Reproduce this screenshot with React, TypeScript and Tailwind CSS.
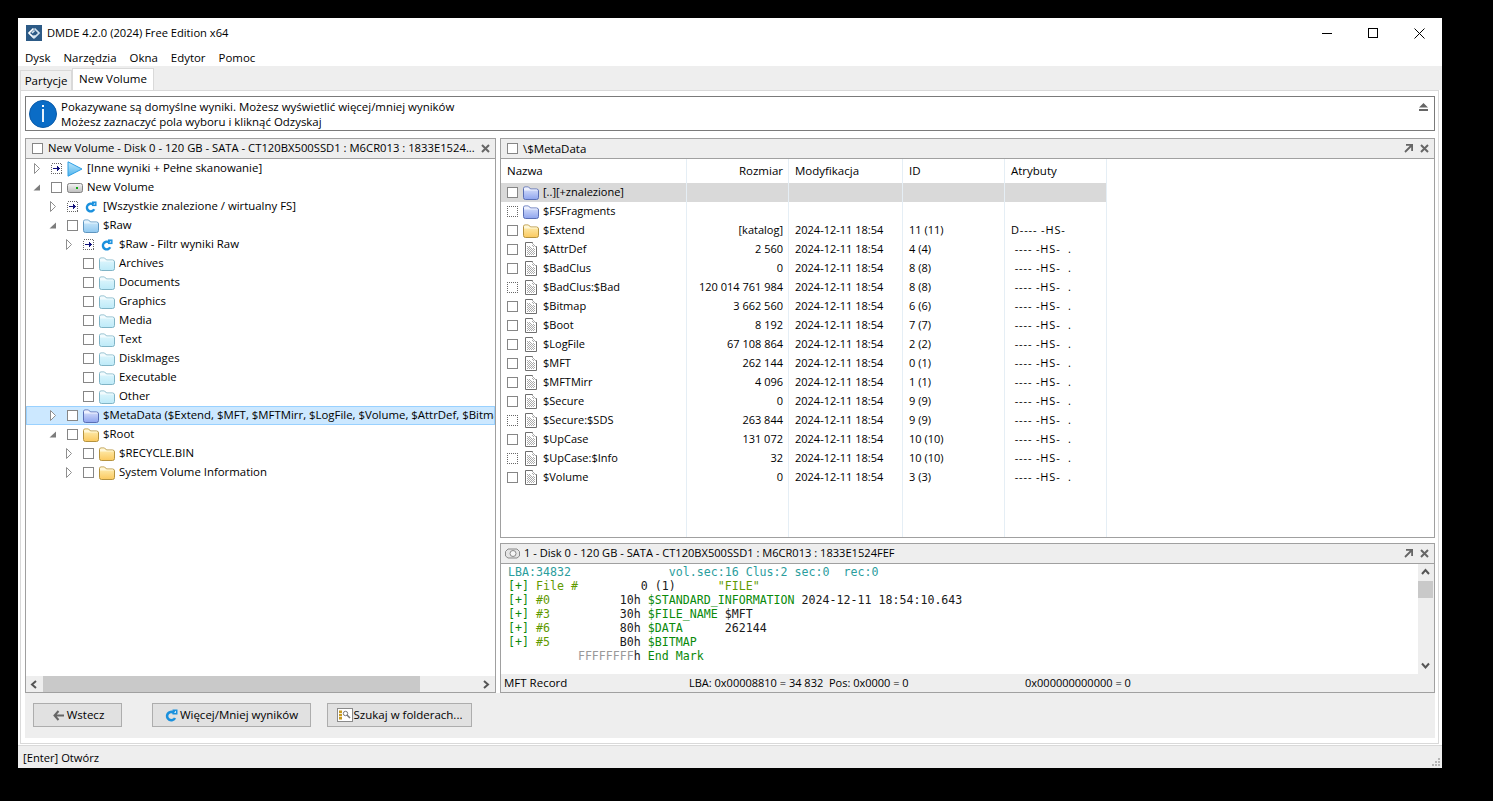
import React from "react";

type FolderColor = "blue" | "cyan" | "violet" | "yellow";
type RowIcon = FolderColor | "play" | "refresh" | "disk";

type TreeRow = {
  level: number;
  label: string;
  icon: RowIcon;
  expander?: "open" | "closed";
  box?: "plain" | "jump";
  selected?: boolean;
};

const treeRows: TreeRow[] = [
  { level: 0, label: "[Inne wyniki + Pełne skanowanie]", icon: "play", expander: "closed", box: "jump" },
  { level: 0, label: "New Volume", icon: "disk", expander: "open" },
  { level: 1, label: "[Wszystkie znalezione / wirtualny FS]", icon: "refresh", expander: "closed", box: "jump" },
  { level: 1, label: "$Raw", icon: "blue", expander: "open" },
  { level: 2, label: "$Raw - Filtr wyniki Raw", icon: "refresh", expander: "closed", box: "jump" },
  { level: 2, label: "Archives", icon: "cyan" },
  { level: 2, label: "Documents", icon: "cyan" },
  { level: 2, label: "Graphics", icon: "cyan" },
  { level: 2, label: "Media", icon: "cyan" },
  { level: 2, label: "Text", icon: "cyan" },
  { level: 2, label: "DiskImages", icon: "cyan" },
  { level: 2, label: "Executable", icon: "cyan" },
  { level: 2, label: "Other", icon: "cyan" },
  {
    level: 1,
    label: "$MetaData ($Extend, $MFT, $MFTMirr, $LogFile, $Volume, $AttrDef, $Bitmap",
    icon: "violet",
    expander: "closed",
    selected: true,
  },
  { level: 1, label: "$Root", icon: "yellow", expander: "open" },
  { level: 2, label: "$RECYCLE.BIN", icon: "yellow", expander: "closed" },
  { level: 2, label: "System Volume Information", icon: "yellow", expander: "closed" },
];

type FileRow = {
  name: string;
  size?: string;
  date?: string;
  id?: string;
  attr?: string;
  icon: "file" | "violet" | "yellow";
  dotted?: boolean;
  active?: boolean;
};

const stamp = "2024-12-11 18:54";
const sysAttr = " ---- -HS-  .";

const fileRows: FileRow[] = [
  { name: "[..][+znalezione]", icon: "violet", active: true },
  { name: "$FSFragments", icon: "violet", dotted: true },
  { name: "$Extend", icon: "yellow", size: "[katalog]", date: stamp, id: "11 (11)", attr: "D---- -HS-" },
  { name: "$AttrDef", icon: "file", size: "2 560", date: stamp, id: "4 (4)", attr: sysAttr },
  { name: "$BadClus", icon: "file", size: "0", date: stamp, id: "8 (8)", attr: sysAttr },
  { name: "$BadClus:$Bad", icon: "file", size: "120 014 761 984", date: stamp, id: "8 (8)", attr: sysAttr, dotted: true },
  { name: "$Bitmap", icon: "file", size: "3 662 560", date: stamp, id: "6 (6)", attr: sysAttr },
  { name: "$Boot", icon: "file", size: "8 192", date: stamp, id: "7 (7)", attr: sysAttr },
  { name: "$LogFile", icon: "file", size: "67 108 864", date: stamp, id: "2 (2)", attr: sysAttr },
  { name: "$MFT", icon: "file", size: "262 144", date: stamp, id: "0 (1)", attr: sysAttr },
  { name: "$MFTMirr", icon: "file", size: "4 096", date: stamp, id: "1 (1)", attr: sysAttr },
  { name: "$Secure", icon: "file", size: "0", date: stamp, id: "9 (9)", attr: sysAttr },
  { name: "$Secure:$SDS", icon: "file", size: "263 844", date: stamp, id: "9 (9)", attr: sysAttr, dotted: true },
  { name: "$UpCase", icon: "file", size: "131 072", date: stamp, id: "10 (10)", attr: sysAttr },
  { name: "$UpCase:$Info", icon: "file", size: "32", date: stamp, id: "10 (10)", attr: sysAttr, dotted: true },
  { name: "$Volume", icon: "file", size: "0", date: stamp, id: "3 (3)", attr: sysAttr },
];

const folderColors: Record<FolderColor, { top: string; bottom: string; tab: string; line: string }> = {
  blue: { top: "#d2ebfb", bottom: "#8fc8f0", tab: "#e4f3fd", line: "#5f96c0" },
  cyan: { top: "#e2f7fd", bottom: "#bdeaf8", tab: "#f2fbfe", line: "#80b4c6" },
  violet: { top: "#dfe6fc", bottom: "#8ea4ee", tab: "#eef1fe", line: "#5a6fb5" },
  yellow: { top: "#fef0b8", bottom: "#fbc95e", tab: "#fff7d8", line: "#b5933f" },
};

function Folder({ color }: { color: FolderColor }) {
  const c = folderColors[color];
  return (
    <svg width="16" height="14" viewBox="0 0 16 14" className="shrink-0">
      <defs>
        <linearGradient id={`folder-${color}`} x1="0" y1="0" x2="0" y2="1">
          <stop offset="0" stopColor={c.top} />
          <stop offset="1" stopColor={c.bottom} />
        </linearGradient>
      </defs>
      <path
        d="M0.5 11.5V2.5Q0.5 1 2 1H5.5L7.5 3H13.5Q15.5 3 15.5 5V11.5Q15.5 13.5 13.5 13.5H2.5Q0.5 13.5 0.5 11.5Z"
        fill={`url(#folder-${color})`}
        stroke={c.line}
      />
      <path d="M1 4.5V2.5Q1 1.5 2 1.5H5.3L7.3 3.5H13.5Q14.6 3.5 15 4.5Z" fill={c.tab} />
    </svg>
  );
}

function FileIcon() {
  return (
    <svg width="12" height="15" viewBox="0 0 12 15" className="shrink-0" shapeRendering="crispEdges">
      <defs>
        <pattern id="file-dots" width="2" height="2" patternUnits="userSpaceOnUse">
          <rect width="2" height="2" fill="#fff" />
          <rect width="1" height="1" fill="#aaaaaa" />
          <rect x="1" y="1" width="1" height="1" fill="#aaaaaa" />
        </pattern>
      </defs>
      <path d="M0.5 0.5H7.5L11.5 4.5V14.5H0.5Z" fill="#fff" stroke="#6e6e6e" shapeRendering="auto" />
      <path d="M2 4H6V6H10V13H2Z" fill="url(#file-dots)" />
      <path d="M7 1H8L11 4V5H7Z" fill="url(#file-dots)" />
    </svg>
  );
}

function Play() {
  return (
    <svg width="16" height="16" viewBox="0 0 16 16" className="shrink-0">
      <defs>
        <linearGradient id="play-fill" x1="0" y1="0" x2="0" y2="1">
          <stop offset="0" stopColor="#bfe7fb" />
          <stop offset="1" stopColor="#4fb4ee" />
        </linearGradient>
      </defs>
      <path d="M1 0.8L15 8L1 15.2Z" fill="url(#play-fill)" stroke="#2f9fe4" />
    </svg>
  );
}

function Refresh({ size = 12 }: { size?: number }) {
  return (
    <svg width={size} height={size} viewBox="0 0 13 13" className="shrink-0">
      <path d="M8.8 3.7A4.2 4.2 0 1 0 10 9" fill="none" stroke="#1a90dd" strokeWidth="2.6" />
      <path d="M7.5 0.5H12.5V5.5H7.5Z" fill="#1a90dd" />
      <path d="M9 3.8L11 1.8V3.8Z" fill="#fff" />
    </svg>
  );
}

function DiskIcon() {
  return (
    <svg width="16" height="10" viewBox="0 0 16 10" className="shrink-0">
      <defs>
        <linearGradient id="disk-fill" x1="0" y1="0" x2="0" y2="1">
          <stop offset="0" stopColor="#f5f5f5" />
          <stop offset="1" stopColor="#bdbdbd" />
        </linearGradient>
      </defs>
      <rect x="0.5" y="0.5" width="15" height="9" rx="2" fill="url(#disk-fill)" stroke="#808080" />
      <rect x="9" y="4" width="2" height="2" fill="#13a813" />
    </svg>
  );
}

function Expander({ kind }: { kind?: "open" | "closed" }) {
  if (!kind) return <span className="w-[8px] shrink-0" />;
  if (kind === "open") {
    return (
      <svg width="8" height="11" viewBox="0 0 8 11" className="shrink-0">
        <path d="M0.5 8.5L7 2.5V8.5Z" fill="#7c7c7c" />
      </svg>
    );
  }
  return (
    <svg width="8" height="11" viewBox="0 0 8 11" className="shrink-0">
      <path d="M1.5 0.5L6.5 5.5L1.5 10.5Z" fill="#fff" stroke="#8f8f8f" />
    </svg>
  );
}

function Check({ dotted }: { dotted?: boolean }) {
  return (
    <span
      className={`block w-[11px] h-[11px] shrink-0 bg-white border ${
        dotted ? "border-dotted border-[#666]" : "border-[#868686]"
      }`}
    />
  );
}

function JumpBox() {
  return (
    <svg width="11" height="11" viewBox="0 0 11 11" className="shrink-0" shapeRendering="crispEdges">
      <rect x="0.5" y="0.5" width="10" height="10" fill="#fff" stroke="#666" strokeDasharray="1 1" />
      <path d="M2 5H6V6H2ZM6 3H7V4H8V5H9V6H8V7H7V8H6Z" fill="#10107a" />
    </svg>
  );
}

function CloseGlyph() {
  return (
    <svg width="9" height="9" viewBox="0 0 9 9" className="shrink-0">
      <path d="M1 1L8 8M8 1L1 8" stroke="#666" strokeWidth="2" />
    </svg>
  );
}

function MaximizeGlyph() {
  return (
    <svg width="9" height="9" viewBox="0 0 9 9" className="shrink-0">
      <path d="M2 0.9H8.1V7M8 1L1 8" fill="none" stroke="#666" strokeWidth="1.8" />
    </svg>
  );
}

function Chevron({ dir }: { dir: "left" | "right" | "up" | "down" }) {
  const d = {
    left: "M6 1L2 4.5L6 8",
    right: "M2 1L6 4.5L2 8",
    up: "M1 6L4.5 2L8 6",
    down: "M1 2.5L4.5 6.5L8 2.5",
  }[dir];
  return (
    <svg width="9" height="9" viewBox="0 0 9 9" className="shrink-0">
      <path d={d} fill="none" stroke="#555" strokeWidth="2" />
    </svg>
  );
}

function RowGlyph({ icon }: { icon: RowIcon }) {
  if (icon === "play") return <Play />;
  if (icon === "disk") return <DiskIcon />;
  if (icon === "refresh") {
    return (
      <span className="w-[16px] flex justify-center shrink-0">
        <Refresh />
      </span>
    );
  }
  return <Folder color={icon} />;
}

function PanelHeader({ children, right }: { children: React.ReactNode; right: React.ReactNode }) {
  return (
    <div className="h-[20px] shrink-0 flex items-center bg-[#eeeeee] border-b border-[#a0a0a0] text-[11.25px]">
      {children}
      <span className="ml-auto flex items-center gap-[7px] pr-[5px]">{right}</span>
    </div>
  );
}

function Tree() {
  return (
    <div className="flex-1 min-h-0 overflow-hidden text-[11.4px]">
      {treeRows.map((r) => (
        <div
          key={r.label}
          className={`h-[19px] flex items-center whitespace-nowrap overflow-hidden ${
            r.selected ? "bg-[#cce8ff] outline outline-1 -outline-offset-1 outline-[#99d1ff]" : ""
          }`}
        >
          <span className={r.level === 0 ? "w-[7px] shrink-0" : r.level === 1 ? "w-[23px] shrink-0" : "w-[39px] shrink-0"} />
          <Expander kind={r.expander} />
          <span className="w-[10px] shrink-0" />
          {r.box === "jump" ? <JumpBox /> : <Check />}
          <span className="w-[5px] shrink-0" />
          <RowGlyph icon={r.icon} />
          <span className="w-[4px] shrink-0" />
          <span className="pb-[2px]">{r.label}</span>
        </div>
      ))}
    </div>
  );
}

function FileTable() {
  const line = "border-r border-[#e5eef5]";
  return (
    <div className="flex-1 min-h-0 relative overflow-hidden">
      <div className="h-[24px] flex items-center">
        <span className={`w-[186px] h-full flex items-center pl-[6px] ${line}`}>Nazwa</span>
        <span className={`w-[102px] h-full flex items-center justify-end pr-[5px] ${line}`}>Rozmiar</span>
        <span className={`w-[114px] h-full flex items-center pl-[6px] ${line}`}>Modyfikacja</span>
        <span className={`w-[102px] h-full flex items-center pl-[6px] ${line}`}>ID</span>
        <span className={`w-[102px] h-full flex items-center pl-[6px] ${line}`}>Atrybuty</span>
      </div>
      {fileRows.map((f) => (
        <div key={f.name} className={`h-[19px] w-[606px] flex items-center whitespace-pre text-[11px] ${f.active ? "bg-[#d9d9d9]" : ""}`}>
          <span className={`w-[186px] h-full flex items-center pl-[6px] ${line}`}>
            <Check dotted={f.dotted} />
            <span className="w-[5px] shrink-0" />
            <span className="w-[15px] flex justify-center shrink-0">
              {f.icon === "file" ? <FileIcon /> : <Folder color={f.icon} />}
            </span>
            <span className="ml-[5px]">{f.name}</span>
          </span>
          <span className={`w-[102px] h-full flex items-center justify-end pr-[5px] ${line}`}>{f.size}</span>
          <span className={`w-[114px] h-full flex items-center pl-[6px] ${line}`}>{f.date}</span>
          <span className={`w-[102px] h-full flex items-center pl-[6px] ${line}`}>{f.id}</span>
          <span className={`w-[102px] h-full flex items-center pl-[6px] tracking-[0.85px] ${line}`}>{f.attr}</span>
        </div>
      ))}
      {/* column rules keep running below the last row */}
      <div className="flex h-[60px]">
        <span className={`w-[186px] ${line}`} />
        <span className={`w-[102px] ${line}`} />
        <span className={`w-[114px] ${line}`} />
        <span className={`w-[102px] ${line}`} />
        <span className={`w-[102px] ${line}`} />
      </div>
    </div>
  );
}

function HexView() {
  const teal = "text-[#2a9d9d]";
  const green = "text-[#0a8a0a]";
  const olive = "text-[#5f9a00]";
  const dark = "text-[#1a1a1a]";
  const tag = (n: string, off: string, name: string, rest: React.ReactNode, key: string) => (
    <div key={key} className="h-[14px]">
      <span className={green}>[+] </span>
      <span className={olive}>{n.padEnd(12)}</span>
      <span className={dark}>{off}</span>
      <span className={green}>{` ${name}`}</span>
      {rest}
    </div>
  );
  return (
    <div className="flex-1 min-w-0 pl-[7px] pt-px font-['DejaVu_Sans_Mono',monospace] text-[11.62px] leading-[14px] whitespace-pre bg-white">
      <div className={`h-[14px] ${teal}`}>{"LBA:34832".padEnd(23) + "vol.sec:16 Clus:2 sec:0  rec:0"}</div>
      <div className="h-[14px]">
        <span className={green}>[+] </span>
        <span className={olive}>{"File #".padEnd(15)}</span>
        <span className={dark}>{"0 (1)"}</span>
        <span className={olive}>{'      "FILE"'}</span>
      </div>
      {tag("#0", "10h", "$STANDARD_INFORMATION", <span className={dark}> 2024-12-11 18:54:10.643</span>, "a")}
      {tag("#3", "30h", "$FILE_NAME", <span className={dark}> $MFT</span>, "b")}
      {tag("#6", "80h", "$DATA", <span className={dark}>      262144</span>, "c")}
      {tag("#5", "B0h", "$BITMAP", null, "d")}
      <div className="h-[14px]">
        <span className="text-[#999999]">{"          FFFFFFFF"}</span>
        <span className={dark}>h</span>
        <span className={green}> End Mark</span>
      </div>
    </div>
  );
}

export default function App() {
  return (
    <div className="w-[1493px] h-[801px] bg-black pt-[18px] pl-[18px] overflow-hidden font-['Open_Sans',sans-serif] text-[11.5px] text-black">
      <div className="w-[1424px] h-[750px] bg-white flex flex-col">
        {/* title bar */}
        <div className="h-[30px] shrink-0 flex items-center pl-[8px]">
          <svg width="16" height="16" viewBox="0 0 16 16" className="shrink-0">
            <rect width="16" height="16" fill="#2c5a86" />
            <path d="M7.5 3.5L3 8L7.5 12.5L9.5 10.5" fill="none" stroke="#fff" strokeWidth="1.7" />
            <path d="M8.5 3.5L13 8L8.5 12.5L6.5 10.5M8.5 5.5L6 8" fill="none" stroke="#d5e4f0" strokeWidth="1.7" />
          </svg>
          <span className="ml-[5px] text-[11.15px]">DMDE 4.2.0 (2024) Free Edition x64</span>
          <div className="ml-auto flex items-center">
            <span className="w-[46px] flex justify-center">
              <span className="block w-[10px] h-px bg-black" />
            </span>
            <span className="w-[46px] flex justify-center">
              <span className="block w-[10px] h-[10px] border border-black" />
            </span>
            <span className="w-[46px] flex justify-center">
              <svg width="11" height="11" viewBox="0 0 11 11">
                <path d="M0.5 0.5L10.5 10.5M10.5 0.5L0.5 10.5" stroke="#000" />
              </svg>
            </span>
          </div>
        </div>

        {/* menu */}
        <div className="h-[18px] shrink-0 flex items-center pl-[7px] gap-[13px] text-[11.45px] pt-px">
          {["Dysk", "Narzędzia", "Okna", "Edytor", "Pomoc"].map((m) => (
            <span key={m}>{m}</span>
          ))}
        </div>

        {/* tabs */}
        <div className="h-[24px] shrink-0 bg-[#eeeeee] flex items-end pl-[2px]">
          <span className="w-[52px] h-[20px] flex items-center justify-center border border-b-0 border-[#d9d9d9] bg-[#f0f0f0]">
            Partycje
          </span>
          <span className="w-[82px] h-[22px] pb-[2px] flex items-center justify-center border border-b-0 border-[#d9d9d9] bg-white">
            New Volume
          </span>
        </div>

        {/* tab pane */}
        <div className="h-[654px] shrink-0 ml-[2px] mr-[3px] border border-[#d9d9d9] bg-white pl-[4px] pr-[3px] pt-[5px] pb-[5px] flex flex-col">
          <div className="h-[35px] shrink-0 border border-[#7a7a7a] flex items-center pl-[3px] pr-[6px]">
            <span className="w-[28px] h-[28px] shrink-0 rounded-full bg-[#0a6cc6] border border-[#0a5aa8] flex flex-col items-center justify-center gap-[2px]">
              <span className="block w-[2px] h-[2px] bg-white" />
              <span className="block w-[2px] h-[13px] bg-[#e8f2fb]" />
            </span>
            <div className="ml-[4px] leading-[15px] text-[11.45px]">
              <div>Pokazywane są domyślne wyniki. Możesz wyświetlić więcej/mniej wyników</div>
              <div>Możesz zaznaczyć pola wyboru i kliknąć Odzyskaj</div>
            </div>
            <svg width="9" height="8" viewBox="0 0 9 8" className="ml-auto self-start mt-[6px] shrink-0">
              <path d="M4.5 0L9 4.5H0Z M0 6H9V8H0Z" fill="#666" />
            </svg>
          </div>

          <div className="h-[555px] shrink-0 mt-[7px] flex gap-[4px]">
            {/* left panel */}
            <div className="w-[471px] shrink-0 border border-[#a0a0a0] flex flex-col">
              <PanelHeader right={<CloseGlyph />}>
                <span className="ml-[6px]">
                  <Check />
                </span>
                <span className="ml-[5px] whitespace-nowrap">
                  New Volume - Disk 0 - 120 GB - SATA - CT120BX500SSD1 : M6CR013 : 1833E1524...
                </span>
              </PanelHeader>
              <Tree />
              <div className="h-[16px] shrink-0 bg-[#eeeeee] flex items-center">
                <span className="w-[17px] flex justify-center">
                  <Chevron dir="left" />
                </span>
                <span className="w-[377px] h-full bg-[#c9c9c9]" />
                <span className="ml-auto w-[17px] flex justify-center">
                  <Chevron dir="right" />
                </span>
              </div>
            </div>

            {/* right column */}
            <div className="flex-1 min-w-0 flex flex-col gap-[5px]">
              <div className="h-[400px] shrink-0 border border-[#a0a0a0] flex flex-col">
                <PanelHeader
                  right={
                    <>
                      <MaximizeGlyph />
                      <CloseGlyph />
                    </>
                  }
                >
                  <span className="ml-[6px]">
                    <Check />
                  </span>
                  <span className="ml-[5px] text-[11.5px]">\$MetaData</span>
                </PanelHeader>
                <FileTable />
              </div>

              <div className="h-[150px] shrink-0 border border-[#a0a0a0] flex flex-col">
                <PanelHeader
                  right={
                    <>
                      <MaximizeGlyph />
                      <CloseGlyph />
                    </>
                  }
                >
                  <svg width="15" height="11" viewBox="0 0 15 11" className="ml-[4px] shrink-0">
                    <path d="M3 1H12L14.5 3.5V8L12 10H3L0.5 8V3.5Z" fill="#e4e4e4" stroke="#8a8a8a" />
                    <ellipse cx="8" cy="5.5" rx="3" ry="3" fill="#f6f6f6" stroke="#8a8a8a" />
                  </svg>
                  <span className="ml-[4px] whitespace-nowrap text-[11.1px]">1 - Disk 0 - 120 GB - SATA - CT120BX500SSD1 : M6CR013 : 1833E1524FEF</span>
                </PanelHeader>
                <div className="h-[110px] shrink-0 flex">
                  <HexView />
                  <div className="w-[15px] shrink-0 bg-[#eeeeee] flex flex-col items-center">
                    <span className="h-[17px] flex items-center">
                      <Chevron dir="up" />
                    </span>
                    <span className="w-full h-[17px] bg-[#c9c9c9]" />
                    <span className="mt-auto h-[17px] flex items-center">
                      <Chevron dir="down" />
                    </span>
                  </div>
                  <div className="w-[1px] shrink-0 bg-[#eeeeee]" />
                </div>
                <div className="flex-1 bg-[#eeeeee] flex items-center whitespace-pre pl-[3px]">
                  <span className="w-[185px]">MFT Record</span>
                  <span className="w-[336px] text-[11px]">LBA: 0x00008810 = 34 832  Pos: 0x0000 = 0</span>
                  <span className="text-[11px]">0x000000000000 = 0</span>
                </div>
              </div>
            </div>
          </div>

          {/* button bar */}
          <div className="flex-1 bg-[#eeeeee] flex items-start pt-[10px] pl-[8px]">
            <button className="w-[89px] h-[24px] flex items-center justify-center gap-[3px] pl-[2px] bg-[#e1e1e1] border border-[#adadad]">
              <svg width="11" height="11" viewBox="0 0 11 11">
                <path d="M5.5 1L1.5 5.5L5.5 10M2 5.5H11" fill="none" stroke="#666" strokeWidth="2" />
              </svg>
              Wstecz
            </button>
            <button className="ml-[30px] w-[159px] h-[24px] flex items-center justify-center gap-[2px] bg-[#e1e1e1] border border-[#adadad]">
              <Refresh size={13} />
              Więcej/Mniej wyników
            </button>
            <button className="ml-[16px] w-[145px] h-[24px] flex items-center justify-center gap-px bg-[#e1e1e1] border border-[#adadad]">
              <svg width="16" height="14" viewBox="0 0 16 14" className="shrink-0">
                <rect x="0.5" y="0.5" width="15" height="13" fill="#fff" stroke="#8a8a8a" />
                <rect x="2" y="2.5" width="3" height="2.5" fill="#c89a20" />
                <rect x="2" y="5.8" width="3" height="2.5" fill="#c89a20" />
                <rect x="2" y="9" width="3" height="2.5" fill="#c89a20" />
                <circle cx="8.5" cy="5.5" r="2.2" fill="none" stroke="#777" />
                <path d="M10 7L13 10" stroke="#777" strokeWidth="1.5" />
              </svg>
              Szukaj w folderach...
            </button>
          </div>
        </div>

        {/* status bar */}
        <div className="mt-[1px] flex-1 border-t border-[#d9d9d9] bg-[#eeeeee] flex items-center pl-[5px] text-[11.2px]">
          <span className="pt-[2px]">[Enter] Otwórz</span>
          <svg width="9" height="9" viewBox="0 0 9 9" className="ml-auto self-end mb-[2px] mr-[2px]">
            <path d="M7 1h2v2h-2zM4 4h2v2h-2zM7 4h2v2h-2zM1 7h2v2h-2zM4 7h2v2h-2zM7 7h2v2h-2z" fill="#b5b5b5" />
          </svg>
        </div>
      </div>
    </div>
  );
}
